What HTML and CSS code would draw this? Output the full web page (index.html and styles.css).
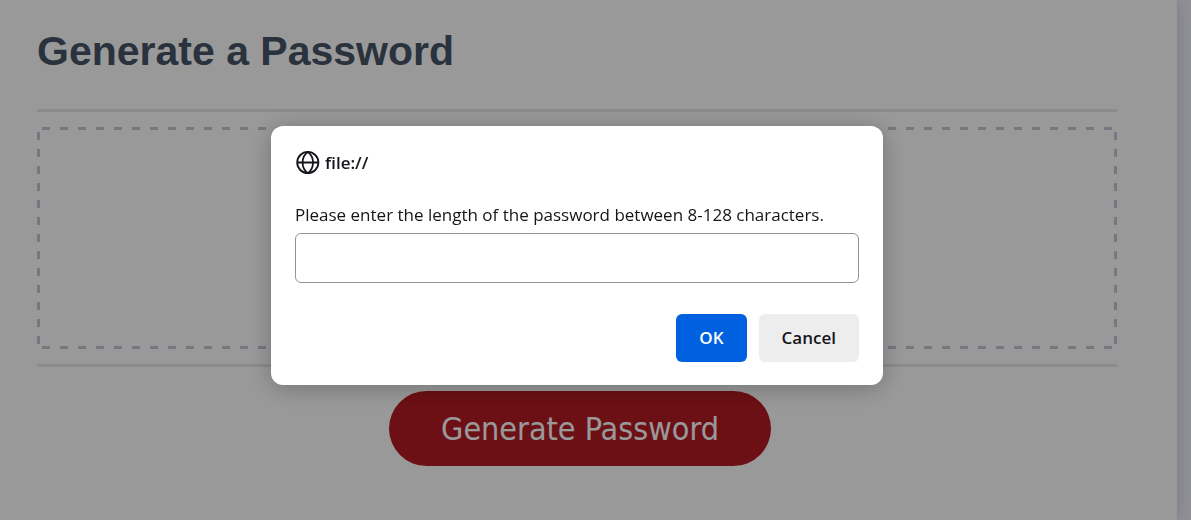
FILE: index.html
```html
<!DOCTYPE html>
<html lang="en">
<head>
<meta charset="utf-8">
<meta name="viewport" content="width=device-width, initial-scale=1">
<title>Password Generator</title>
<link rel="stylesheet" href="styles.css">
</head>
<body>
<main class="card">
  <header class="card-header"><h2 class="card-title">Generate a Password</h2></header>
  <section class="card-body">
    <textarea class="password" readonly aria-label="Your secure password"></textarea>
  </section>
  <footer class="card-footer"><button class="generate" type="button">Generate Password</button></footer>
</main>
<div class="overlay">
  <dialog class="prompt" open aria-labelledby="origin">
    <form class="prompt-form" method="dialog">
      <div class="origin">
        <svg class="globe" viewBox="0 0 25 25" fill="none" stroke="currentColor" stroke-width="1.8" aria-hidden="true">
          <circle cx="12.800" cy="12.500" r="10.600"/>
          <path d="M2.200 12.500h21.200M12.800 1.900C9 4.500 7.600 8.500 7.600 12.500s1.400 8 5.200 10.600M12.800 1.900c3.800 2.600 5.200 6.600 5.200 10.600s-1.400 8-5.200 10.600"/>
        </svg>
        <span id="origin">file://</span>
      </div>
      <label class="message" for="length">Please enter the length of the password between 8-128 characters.</label>
      <input class="field" id="length" type="text">
      <div class="actions">
        <button class="action primary">OK</button>
        <button class="action">Cancel</button>
      </div>
    </form>
  </dialog>
</div>
</body>
</html>
```
FILE: styles.css
```css
* { box-sizing: border-box; }

body {
  margin: 0;
  min-height: 100vh;
  display: flex;
  padding-right: 14px;
  overflow: hidden;
  background: #f2f1fb;
  font-family: "Liberation Sans", Arial, sans-serif;
}

.card {
  flex: 1;
  padding: 0 60px 54px 37px;
  background: #fff;
  box-shadow: 0 0 20px rgba(0, 0, 0, 0.15);
}

.card-header { padding: 25px 0 31px; }

.card-title {
  margin: 0;
  color: #475465;
  font-size: 41px;
  line-height: 53px;
}

.card-body {
  padding: 15px 0;
  border-top: 3px solid #e8e8ea;
  border-bottom: 3px solid #e8e8ea;
}

.password {
  --dash: #c1c8d6;
  display: block;
  width: 100%;
  height: 222px;
  border: 0;
  border-radius: 6px;
  resize: none;
  background:
    repeating-linear-gradient(90deg, transparent 0 5px, var(--dash) 5px 13px, transparent 13px 18px) top / 100% 3px no-repeat,
    repeating-linear-gradient(90deg, transparent 0 5px, var(--dash) 5px 13px, transparent 13px 18px) bottom / 100% 3px no-repeat,
    repeating-linear-gradient(180deg, transparent 0 5px, var(--dash) 5px 13px, transparent 13px 17px) left / 3px 100% no-repeat,
    repeating-linear-gradient(180deg, transparent 0 5px, var(--dash) 5px 13px, transparent 13px 17px) right / 3px 100% no-repeat;
}

.card-footer {
  display: flex;
  justify-content: center;
  padding: 24px 0 0 6px;
}

.generate {
  padding: 17px 52px 15px;
  border: 0;
  border-radius: 38px;
  background: #b41b23;
  color: #fff;
  font-family: "DejaVu Sans Condensed", "Noto Sans", sans-serif;
  font-size: 32px;
  line-height: 43px;
}

.overlay {
  position: fixed;
  inset: 0;
  display: flex;
  justify-content: center;
  align-items: flex-start;
  padding: 126px 37px 0 0;
  background: rgba(0, 0, 3, 0.4);
}

.prompt {
  position: static;
  width: 612px;
  max-width: 100%;
  margin: 0;
  padding: 24px 24px 23px;
  border: 0;
  border-radius: 12px;
  background: #fff;
  color: #15141a;
  box-shadow: 0 3px 24px rgba(0, 0, 0, 0.25);
  font-family: "Open Sans", "Noto Sans", sans-serif;
  font-size: 17px;
}

.prompt-form {
  display: flex;
  flex-direction: column;
}

.origin {
  display: flex;
  align-items: center;
  gap: 5px;
  margin-bottom: 28px;
  font-weight: 600;
  line-height: 25px;
}

.globe {
  width: 25px;
  height: 25px;
}

.message {
  margin-bottom: 6px;
  line-height: 24px;
}

.field {
  width: 100%;
  height: 50px;
  padding: 0 12px;
  border: 1px solid #939396;
  border-radius: 6px;
  background: #fff;
  font: inherit;
}

.actions {
  display: flex;
  justify-content: flex-end;
  gap: 12px;
  margin-top: 31px;
}

.action {
  padding: 12px 23px;
  border: 0;
  border-radius: 6px;
  background: #ededee;
  color: #15141a;
  font-family: inherit;
  font-size: 17px;
  font-weight: 600;
  line-height: 24px;
}

.primary {
  background: #0061e0;
  color: #fff;
}
```
